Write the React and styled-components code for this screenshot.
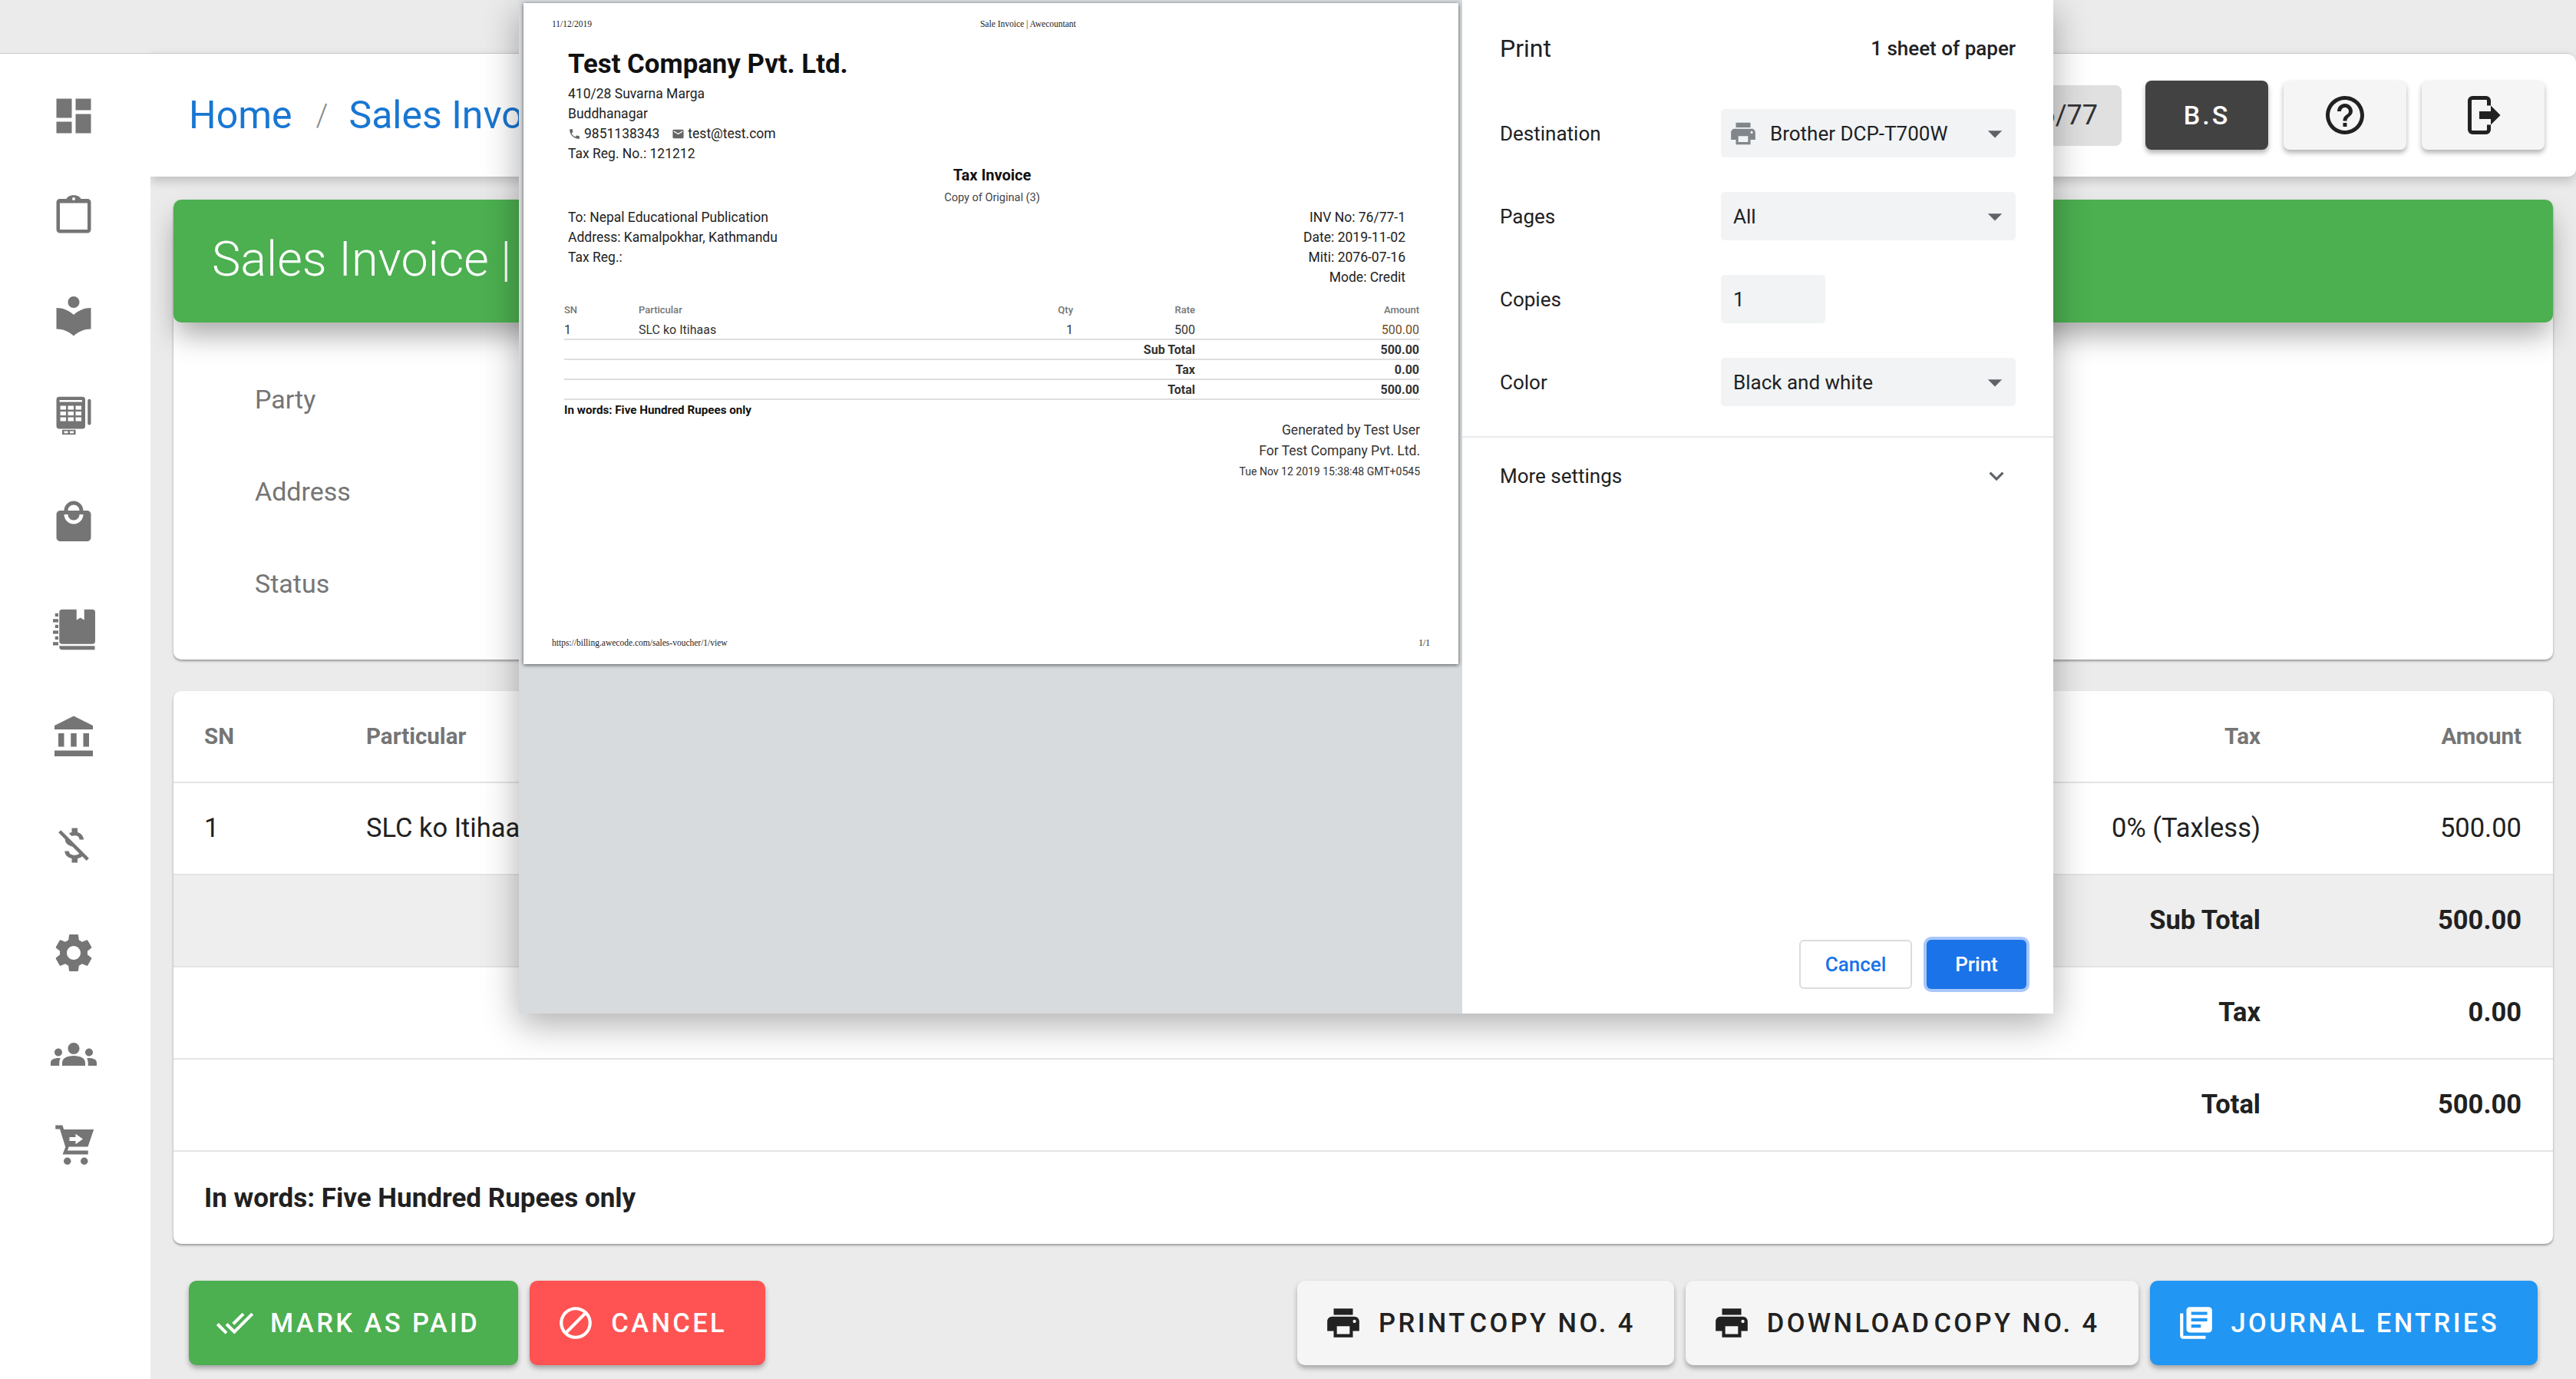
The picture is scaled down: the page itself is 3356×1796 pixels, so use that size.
import React from "react";
import styled, { createGlobalStyle } from "styled-components";
import {
  MdDashboard,
  MdLocalLibrary,
  MdLocalMall,
  MdAccountBalance,
  MdMoneyOff,
  MdSettings,
  MdGroups,
  MdHelpOutline,
  MdPrint,
  MdLibraryBooks,
  MdDoneAll,
  MdBlock,
  MdArrowDropDown,
  MdExpandMore,
  MdLocalPhone,
  MdEmail,
} from "react-icons/md";

const GlobalStyle = createGlobalStyle`
  html, body {
    margin: 0;
    padding: 0;
    background: #ebebeb;
    font-family: Roboto, "Liberation Sans", sans-serif;
  }
  * { box-sizing: border-box; }
`;

const Page = styled.div`
  position: relative;
  display: flex;
  width: 3356px;
  height: 1796px;
  padding-top: 69px;
  overflow: hidden;
  background: #ebebeb;
`;

const Sidebar = styled.nav`
  position: relative;
  z-index: 2;
  display: flex;
  flex-direction: column;
  align-items: center;
  flex: 0 0 196px;
  padding: 51px 4px 0 0;
  background: #fff;
  border-top: 1px solid #c9c9c9;
  color: #757575;
`;

const NavItem = styled.div`
  display: flex;
  justify-content: center;
  height: 60px;
  margin-top: ${(p) => p.$gap}px;
  svg {
    display: block;
    width: 60px;
    height: 60px;
  }
`;

const Main = styled.div`
  display: flex;
  flex-direction: column;
  flex: 1;
  min-width: 0;
`;

const TopBar = styled.header`
  position: relative;
  z-index: 1;
  display: flex;
  align-items: center;
  height: 161px;
  padding: 0 41px 0 50px;
  background: #fff;
  border-top: 1px solid #c9c9c9;
  border-top-right-radius: 12px;
  border-bottom-right-radius: 10px;
  box-shadow: 0 6px 14px rgba(0, 0, 0, 0.18);
`;

const Crumb = styled.span`
  font-size: 50px;
  color: #1976d2;
`;

const CrumbSep = styled.span`
  margin: 0 27px 0 31px;
  font-size: 40px;
  font-weight: 300;
  color: #8a8a8a;
`;

const TopActions = styled.div`
  display: flex;
  align-items: center;
  gap: 20px;
  margin-left: auto;
`;

const YearChip = styled.div`
  display: flex;
  align-items: center;
  height: 79px;
  margin-right: 11px;
  padding: 0 31px;
  border-radius: 8px;
  background: #e0e0e0;
  font-size: 36px;
  color: #333;
`;

const TopButton = styled.div`
  display: flex;
  align-items: center;
  justify-content: center;
  width: 160px;
  height: 90px;
  border-radius: 8px;
  background: ${(p) => (p.$dark ? "#424242" : "#f5f5f5")};
  color: ${(p) => (p.$dark ? "#fff" : "#212121")};
  font-size: 34px;
  font-weight: 500;
  letter-spacing: 3px;
  box-shadow: 0 4px 6px rgba(0, 0, 0, 0.3);
  svg {
    width: 60px;
    height: 60px;
  }
`;

const Content = styled.main`
  display: flex;
  flex-direction: column;
  flex: 1;
  padding: 30px 30px 0;
`;

const InfoCard = styled.section`
  height: 599px;
  border-radius: 10px;
  background: #fff;
  box-shadow: 0 2px 3px rgba(0, 0, 0, 0.35);
`;

const Band = styled.div`
  display: flex;
  align-items: center;
  height: 160px;
  padding-left: 50px;
  padding-bottom: 6px;
  border-radius: 10px;
  background: #4caf50;
  color: #fff;
  font-size: 63px;
  font-weight: 300;
  box-shadow: 0 20px 36px -4px rgba(0, 0, 0, 0.34);
`;

const InfoList = styled.div`
  display: flex;
  flex-direction: column;
  padding: 40px 0 0 106px;
`;

const InfoLabel = styled.div`
  height: 120px;
  font-size: 34px;
  line-height: 120px;
  color: #757575;
`;

const TableCard = styled.section`
  margin-top: 41px;
  border-radius: 10px;
  background: #fff;
  box-shadow: 0 2px 3px rgba(0, 0, 0, 0.35);
`;

const Row = styled.div`
  display: grid;
  grid-template-columns: 211px 1fr 500px 340px;
  align-items: center;
  height: 120px;
  padding: 0 41px ${(p) => (p.$head ? "0" : "2px")} 40px;
  border-bottom: 2px solid #e4e4e4;
  background: ${(p) => (p.$shaded ? "#eeeeee" : "transparent")};
  color: ${(p) => (p.$head ? "#757575" : "#212121")};
  font-size: ${(p) => (p.$head ? "29.5px" : "34.5px")};
  font-weight: ${(p) => (p.$strong || p.$head ? 700 : 400)};
`;

const Right = styled.div`
  text-align: right;
`;

const WordsRow = styled.div`
  display: flex;
  align-items: center;
  height: 120px;
  padding-left: 40px;
  font-size: 35px;
  font-weight: 700;
  color: #212121;
`;

const ButtonBar = styled.div`
  display: flex;
  gap: 15px;
  margin-top: 48px;
  padding: 0 20px;
`;

const ActionButton = styled.div`
  display: flex;
  align-items: center;
  gap: 21px;
  height: 110px;
  margin-left: ${(p) => (p.$push ? "auto" : "0")};
  padding: 0 50px 0 35px;
  border-radius: 10px;
  background: ${(p) => p.$bg};
  color: ${(p) => p.$fg};
  font-size: 34.5px;
  font-weight: 500;
  letter-spacing: 3.4px;
  text-transform: uppercase;
  white-space: nowrap;
  box-shadow: 0 4px 6px rgba(0, 0, 0, 0.3);
  svg {
    flex: none;
    width: 50px;
    height: 50px;
  }
`;

const TightWord = styled.span`
  margin-right: -9px;
`;

/* print dialog on top of the page */
const Dialog = styled.div`
  position: absolute;
  top: 0;
  left: 676px;
  display: flex;
  width: 1999px;
  height: 1320px;
  z-index: 5;
  box-shadow: 0 14px 44px rgba(0, 0, 0, 0.32);
`;

const Preview = styled.div`
  flex: 0 0 1229px;
  padding: 4px 5px 0 6px;
  background: #d8dbde;
`;

const Paper = styled.div`
  display: flex;
  flex-direction: column;
  width: 1218px;
  height: 861px;
  padding: 19px 37px 20px;
  background: #fff;
  box-shadow: 0 1px 5px rgba(0, 0, 0, 0.65);
  color: #222;
  font-size: 17.5px;
  line-height: 26px;
`;

const PaperHead = styled.div`
  display: flex;
  font-family: "Liberation Serif", serif;
  font-size: 11.5px;
  line-height: 16px;
`;

const PaperTitle = styled.span`
  margin-left: 506px;
`;

const Sheet = styled.div`
  display: flex;
  flex-direction: column;
  flex: 1;
  padding: 0 13px 0 16px;
`;

const Company = styled.h1`
  margin: 24px 0 6px;
  padding-left: 5px;
  font-size: 34.8px;
  font-weight: 700;
  line-height: 40px;
  color: #111;
`;

const AddressLine = styled.div`
  display: flex;
  align-items: center;
  padding-left: 5px;
`;

const MiniIcon = styled.span`
  display: inline-flex;
  margin-right: ${(p) => p.$gap}px;
  margin-left: ${(p) => p.$offset || 0}px;
  color: #666;
  svg {
    width: 17px;
    height: 17px;
  }
`;

const CenterTitle = styled.div`
  margin-top: 2px;
  font-size: 20px;
  font-weight: 700;
  text-align: center;
  color: #111;
`;

const CenterSub = styled.div`
  margin: 4px 0 -1px;
  font-size: 14.5px;
  text-align: center;
  color: #444;
`;

const PartyBlock = styled.div`
  display: flex;
  justify-content: space-between;
  padding: 0 19px 0 5px;
`;

const RightColumn = styled.div`
  text-align: right;
`;

const PaperTable = styled.div`
  margin-top: 17px;
`;

const PaperRow = styled.div`
  display: grid;
  grid-template-columns: 97px 506px 60px 159px 292px;
  height: 26px;
  border-bottom: ${(p) => (p.$line ? "2px solid #dedede" : "none")};
  color: ${(p) => (p.$head ? "#757575" : "#333")};
  font-size: ${(p) => (p.$head ? "13px" : "16px")};
  font-weight: ${(p) => (p.$strong ? 700 : p.$head ? 500 : 400)};
  line-height: 26px;
`;

const PaperAmount = styled.div`
  grid-column: ${(p) => p.$col || "auto"};
  text-align: right;
  color: ${(p) => (p.$tint ? "#6d4c1f" : "inherit")};
`;

const PaperWords = styled.div`
  font-size: 15.2px;
  font-weight: 700;
  color: #111;
`;

const Signoff = styled.div`
  margin-top: ${(p) => (p.$small ? "1px" : "0")};
  text-align: right;
  font-size: ${(p) => (p.$small ? "14px" : "17.5px")};
  line-height: 26.5px;
  color: #333;
`;

const PaperFoot = styled.div`
  display: flex;
  justify-content: space-between;
  margin-top: auto;
  font-family: "Liberation Serif", serif;
  font-size: 11.5px;
  line-height: 16px;
`;

const Settings = styled.div`
  display: flex;
  flex-direction: column;
  flex: 1;
  background: #fff;
  color: #202124;
  font-size: 26px;
`;

const SettingsTop = styled.div`
  padding: 0 49px;
`;

const TitleRow = styled.div`
  display: flex;
  align-items: center;
  justify-content: space-between;
  height: 126px;
  margin-bottom: 16px;
`;

const PrintTitle = styled.h2`
  margin: 0;
  font-size: 32px;
  font-weight: 400;
`;

const SheetCount = styled.span`
  font-weight: 500;
`;

const SettingRow = styled.div`
  display: flex;
  align-items: center;
  height: 63px;
  margin-bottom: 45px;
  &:last-child {
    margin-bottom: 39px;
  }
`;

const SettingLabel = styled.div`
  flex: 0 0 288px;
`;

const SelectBox = styled.div`
  display: flex;
  align-items: center;
  width: ${(p) => (p.$short ? "136px" : "384px")};
  height: 63px;
  padding: 0 5px 0 ${(p) => (p.$icon ? "10px" : "16px")};
  border-radius: 5px;
  background: #f1f3f4;
  svg {
    flex: none;
  }
`;

const SelectIcon = styled.span`
  display: inline-flex;
  margin-right: 16px;
  color: #80868b;
  svg {
    width: 38px;
    height: 38px;
  }
`;

const SelectArrow = styled.span`
  display: inline-flex;
  margin-left: auto;
  color: #5f6368;
  svg {
    width: 44px;
    height: 44px;
  }
`;

const MoreRow = styled.div`
  display: flex;
  align-items: center;
  justify-content: space-between;
  height: 101px;
  padding: 0 55px 0 49px;
  border-top: 2px solid #e8eaed;
  svg {
    width: 38px;
    height: 38px;
    color: #5f6368;
  }
`;

const DialogActions = styled.div`
  display: flex;
  justify-content: flex-end;
  align-items: center;
  gap: 19px;
  margin-top: auto;
  padding: 0 35px 32px 0;
`;

const DialogButton = styled.div`
  display: flex;
  align-items: center;
  justify-content: center;
  width: ${(p) => (p.$primary ? "130px" : "147px")};
  height: 64px;
  border-radius: 6px;
  border: ${(p) => (p.$primary ? "none" : "2px solid #dadce0")};
  background: ${(p) => (p.$primary ? "#1a73e8" : "#fff")};
  color: ${(p) => (p.$primary ? "#fff" : "#1a73e8")};
  font-weight: 500;
  box-shadow: ${(p) => (p.$primary ? "0 0 0 4px #a8c7fa" : "none")};
`;

const ClipboardIcon = () => (
  <svg viewBox="0 0 24 24" fill="currentColor">
    <path
      fillRule="evenodd"
      d="M4.8 4H8.2C8.7 2.8 10.200 2.100 12 2.100S15.300 2.800 15.800 4H19.200A1.800 1.800 0 0 1 21 5.800V20A1.800 1.800 0 0 1 19.200 21.800H4.800A1.800 1.800 0 0 1 3 20V5.800A1.800 1.800 0 0 1 4.800 4ZM4.800 6.200V20H19.200V6.200ZM12 3.200A.8.8 0 1 0 12 4.800A.8.8 0 1 0 12 3.200Z"
    />
  </svg>
);

const TerminalIcon = () => (
  <svg viewBox="0 0 24 24" fill="currentColor">
    <path
      fillRule="evenodd"
      d="M4.500 2.300H16.500A1.500 1.500 0 0 1 18 3.800V17.500A1.500 1.500 0 0 1 16.500 19H4.500A1.500 1.500 0 0 1 3 17.500V3.800A1.500 1.500 0 0 1 4.500 2.300ZM4.600 4V5H16.400V4ZM5 7V9H8V7ZM9 7V9H12V7ZM13 7V9H16V7ZM5 10V12H8V10ZM9 10V12H12V10ZM13 10V12H16V10ZM5 13V15H8V13ZM9 13V15H12V13ZM13 13V15H16V13Z"
    />
    <rect x="19.300" y="3.500" width="1.700" height="13.500" rx=".8" />
    <path
      fillRule="evenodd"
      d="M6 19.500H13V22H6ZM7 20.200V21.300H9V20.200ZM10 20.200V21.300H12V20.200Z"
    />
  </svg>
);

const NotebookIcon = () => (
  <svg viewBox="0 0 24 24" fill="currentColor">
    <path d="M6 1.500H13.500V7L15.500 5.800L17.500 7V1.500H21.700A1.500 1.500 0 0 1 23.200 3V18A1.500 1.500 0 0 1 21.700 19.500H6A1.500 1.500 0 0 1 4.500 18V3A1.500 1.500 0 0 1 6 1.500Z" />
    <path d="M4.500 20.500H23V22.500H6A1.500 1.500 0 0 1 4.500 21Z" />
    <rect x="2.300" y="3.500" width="1.700" height="1.700" />
    <rect x="1.200" y="6.500" width="2.800" height="1.700" />
    <rect x="2.300" y="9.500" width="1.700" height="1.700" />
    <rect x="1.200" y="12.500" width="2.800" height="1.700" />
    <rect x="2.300" y="15.500" width="1.700" height="1.700" />
    <rect x="1.200" y="18.500" width="2.800" height="1.700" />
  </svg>
);

const CartIcon = () => (
  <svg viewBox="0 0 24 24" fill="currentColor">
    <path
      fillRule="evenodd"
      d="M5.900 4H22.500L19.400 13H8.300ZM13 6.300V8H9.800V10H13V11.700L16.800 9Z"
    />
    <path d="M2.500 1.800H6.200L9.500 13L8.800 15H19.500V17H6.200L7.700 13.200L4.800 3.800H2.500Z" />
    <circle cx="8.700" cy="20.500" r="1.900" />
    <circle cx="17.500" cy="20.500" r="1.900" />
  </svg>
);

const ExitIcon = () => (
  <svg viewBox="0 0 24 24">
    <path
      d="M15 7V4.500A1.500 1.500 0 0 0 13.500 3H6.500A1.500 1.500 0 0 0 5 4.500V19.500A1.500 1.500 0 0 0 6.500 21H13.500A1.500 1.500 0 0 0 15 19.500V17"
      fill="none"
      stroke="currentColor"
      strokeWidth="2"
    />
    <path d="M10 10H16V7L21 12L16 17V14H10Z" fill="currentColor" />
  </svg>
);

const navItems = [
  { key: "dashboard", icon: <MdDashboard />, gap: 0 },
  { key: "clipboard", icon: <ClipboardIcon />, gap: 68 },
  { key: "library", icon: <MdLocalLibrary />, gap: 72 },
  { key: "terminal", icon: <TerminalIcon />, gap: 70 },
  { key: "mall", icon: <MdLocalMall />, gap: 79 },
  { key: "notebook", icon: <NotebookIcon />, gap: 80 },
  { key: "bank", icon: <MdAccountBalance />, gap: 80 },
  { key: "money", icon: <MdMoneyOff />, gap: 81 },
  { key: "settings", icon: <MdSettings />, gap: 80 },
  { key: "groups", icon: <MdGroups />, gap: 72 },
  { key: "cart", icon: <CartIcon />, gap: 58 },
];

const totals = [
  { label: "Sub Total", value: "500.00", shaded: true },
  { label: "Tax", value: "0.00" },
  { label: "Total", value: "500.00" },
];

const settings = [
  { label: "Destination", value: "Brother DCP-T700W", icon: true },
  { label: "Pages", value: "All" },
  { label: "Copies", value: "1", short: true },
  { label: "Color", value: "Black and white" },
];

const App = () => {
  return (
    <Page>
      <GlobalStyle />
      <Sidebar>
        {navItems.map((item) => (
          <NavItem key={item.key} $gap={item.gap}>
            {item.icon}
          </NavItem>
        ))}
      </Sidebar>
      <Main>
        <TopBar>
          <Crumb>Home</Crumb>
          <CrumbSep>/</CrumbSep>
          <Crumb>Sales Invoice</Crumb>
          <TopActions>
            <YearChip>2076/77</YearChip>
            <TopButton $dark>B.S</TopButton>
            <TopButton>
              <MdHelpOutline />
            </TopButton>
            <TopButton>
              <ExitIcon />
            </TopButton>
          </TopActions>
        </TopBar>
        <Content>
          <InfoCard>
            <Band>Sales Invoice |</Band>
            <InfoList>
              <InfoLabel>Party</InfoLabel>
              <InfoLabel>Address</InfoLabel>
              <InfoLabel>Status</InfoLabel>
            </InfoList>
          </InfoCard>
          <TableCard>
            <Row $head>
              <div>SN</div>
              <div>Particular</div>
              <Right>Tax</Right>
              <Right>Amount</Right>
            </Row>
            <Row>
              <div>1</div>
              <div>SLC ko Itihaas</div>
              <Right>0% (Taxless)</Right>
              <Right>500.00</Right>
            </Row>
            {totals.map((t) => (
              <Row key={t.label} $strong $shaded={t.shaded}>
                <div />
                <div />
                <Right>{t.label}</Right>
                <Right>{t.value}</Right>
              </Row>
            ))}
            <WordsRow>In words: Five Hundred Rupees only</WordsRow>
          </TableCard>
          <ButtonBar>
            <ActionButton $bg="#4caf50" $fg="#fff">
              <MdDoneAll />
              Mark as paid
            </ActionButton>
            <ActionButton $bg="#ff5252" $fg="#fff">
              <MdBlock />
              Cancel
            </ActionButton>
            <ActionButton $push $bg="#f5f5f5" $fg="#212121">
              <MdPrint />
              <span>
                <TightWord>Print</TightWord> Copy No. 4
              </span>
            </ActionButton>
            <ActionButton $bg="#f5f5f5" $fg="#212121">
              <MdPrint />
              <span>
                <TightWord>Download</TightWord> Copy No. 4
              </span>
            </ActionButton>
            <ActionButton $bg="#2196f3" $fg="#fff">
              <MdLibraryBooks />
              Journal Entries
            </ActionButton>
          </ButtonBar>
        </Content>
      </Main>

      <Dialog>
        <Preview>
          <Paper>
            <PaperHead>
              <span>11/12/2019</span>
              <PaperTitle>Sale Invoice | Awecountant</PaperTitle>
            </PaperHead>
            <Sheet>
              <Company>Test Company Pvt. Ltd.</Company>
              <AddressLine>410/28 Suvarna Marga</AddressLine>
              <AddressLine>Buddhanagar</AddressLine>
              <AddressLine>
                <MiniIcon $gap={4}>
                  <MdLocalPhone />
                </MiniIcon>
                9851138343
                <MiniIcon $offset={16} $gap={4}>
                  <MdEmail />
                </MiniIcon>
                test@test.com
              </AddressLine>
              <AddressLine>Tax Reg. No.: 121212</AddressLine>
              <CenterTitle>Tax Invoice</CenterTitle>
              <CenterSub>Copy of Original (3)</CenterSub>
              <PartyBlock>
                <div>
                  <div>To: Nepal Educational Publication</div>
                  <div>Address: Kamalpokhar, Kathmandu</div>
                  <div>Tax Reg.:</div>
                </div>
                <RightColumn>
                  <div>INV No: 76/77-1</div>
                  <div>Date: 2019-11-02</div>
                  <div>Miti: 2076-07-16</div>
                  <div>Mode: Credit</div>
                </RightColumn>
              </PartyBlock>
              <PaperTable>
                <PaperRow $head>
                  <div>SN</div>
                  <div>Particular</div>
                  <PaperAmount>Qty</PaperAmount>
                  <PaperAmount>Rate</PaperAmount>
                  <PaperAmount>Amount</PaperAmount>
                </PaperRow>
                <PaperRow $line>
                  <div>1</div>
                  <div>SLC ko Itihaas</div>
                  <PaperAmount>1</PaperAmount>
                  <PaperAmount>500</PaperAmount>
                  <PaperAmount $tint>500.00</PaperAmount>
                </PaperRow>
                {totals.map((t) => (
                  <PaperRow key={t.label} $line $strong>
                    <PaperAmount $col="4">{t.label}</PaperAmount>
                    <PaperAmount $col="5">{t.value}</PaperAmount>
                  </PaperRow>
                ))}
              </PaperTable>
              <PaperWords>In words: Five Hundred Rupees only</PaperWords>
              <Signoff>Generated by Test User</Signoff>
              <Signoff>For Test Company Pvt. Ltd.</Signoff>
              <Signoff $small>Tue Nov 12 2019 15:38:48 GMT+0545</Signoff>
            </Sheet>
            <PaperFoot>
              <span>https://billing.awecode.com/sales-voucher/1/view</span>
              <span>1/1</span>
            </PaperFoot>
          </Paper>
        </Preview>
        <Settings>
          <SettingsTop>
            <TitleRow>
              <PrintTitle>Print</PrintTitle>
              <SheetCount>1 sheet of paper</SheetCount>
            </TitleRow>
            {settings.map((s) => (
              <SettingRow key={s.label}>
                <SettingLabel>{s.label}</SettingLabel>
                <SelectBox $short={s.short} $icon={s.icon}>
                  {s.icon && (
                    <SelectIcon>
                      <MdPrint />
                    </SelectIcon>
                  )}
                  {s.value}
                  {!s.short && (
                    <SelectArrow>
                      <MdArrowDropDown />
                    </SelectArrow>
                  )}
                </SelectBox>
              </SettingRow>
            ))}
          </SettingsTop>
          <MoreRow>
            More settings
            <MdExpandMore />
          </MoreRow>
          <DialogActions>
            <DialogButton>Cancel</DialogButton>
            <DialogButton $primary>Print</DialogButton>
          </DialogActions>
        </Settings>
      </Dialog>
    </Page>
  );
};

export default App;
